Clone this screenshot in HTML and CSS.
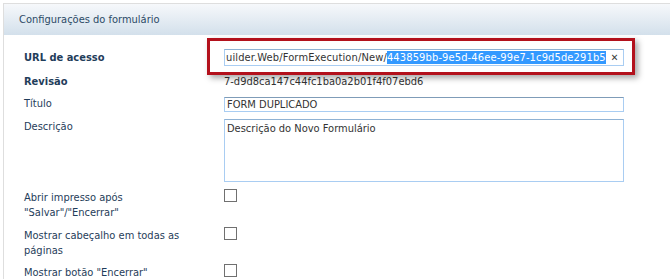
FILE: index.html
```html
<!DOCTYPE html>
<html>
  <head>
    <meta charset="UTF-8">
    <title>Configurações do formulário</title>
    <link rel="stylesheet" href="styles.css">
  </head>
  <body>
    <div class="panel">
      <div class="panel-header">Configurações do formulário</div>

      <div class="panel-body">
        <div class="row">
          <label class="label strong url-label">URL de acesso</label>
          <div class="field url-field">
            <div class="url-input">
              <span class="url-text">uilder.Web/FormExecution/New/<span class="selected">443859bb-9e5d-46ee-99e7-1c9d5de291b5</span></span>
              <span class="clear">&#x2715;</span>
            </div>
            <div class="highlight"></div>
          </div>
        </div>

        <div class="row">
          <label class="label strong">Revisão</label>
          <div class="field text-value">7-d9d8ca147c44fc1ba0a2b01f4f07ebd6</div>
        </div>

        <div class="row">
          <label class="label" for="titulo">Título</label>
          <input class="field text-input" id="titulo" type="text" value="FORM DUPLICADO">
        </div>

        <div class="row">
          <label class="label" for="descricao">Descrição</label>
          <textarea class="field text-area" id="descricao">Descrição do Novo Formulário</textarea>
        </div>

        <div class="row">
          <label class="label wrap">Abrir impresso após "Salvar"/"Encerrar"</label>
          <input class="check" type="checkbox">
        </div>

        <div class="row">
          <label class="label wrap">Mostrar cabeçalho em todas as páginas</label>
          <input class="check" type="checkbox">
        </div>

        <div class="row last-row">
          <label class="label wrap">Mostrar botão "Encerrar"</label>
          <input class="check" type="checkbox">
        </div>
      </div>
    </div>
  </body>
</html>
```

FILE: styles.css
```css
body {
  margin: 0;
  padding: 0;
  background-color: #fff;
  font-family: "DejaVu Sans Condensed", "DejaVu Sans", sans-serif;
  font-size: 11px;
  color: #1f3d5a;
}
.panel {
  margin: 3px 0 0 3px;
  border-top: 1px solid #dedede;
  border-left: 1px solid #dedede;
  height: 276px;
  overflow: hidden;
}
.panel-header {
  height: 31px;
  line-height: 32px;
  padding-left: 15px;
  background: linear-gradient(#f6f8fb, #d3e0eb);
  color: #2c4a66;
}
.panel-body {
  padding: 14px 0 0 20px;
  display: flex;
  flex-direction: column;
  gap: 7px;
}
.row {
  display: flex;
  align-items: flex-start;
}
.last-row {
  margin-top: -1px;
}
.label {
  width: 200px;
  flex-shrink: 0;
  line-height: 15px;
}
.label.strong {
  font-weight: bold;
}
.label.url-label {
  line-height: 18px;
}
.label.wrap {
  width: 165px;
  margin-right: 35px;
  padding-top: 1px;
}
.field {
  width: 400px;
  box-sizing: border-box;
}
.url-field {
  position: relative;
}
.url-input {
  height: 17px;
  box-sizing: border-box;
  border: 1px solid #a9cdf2;
  border-top-color: #8fb2d4;
  display: flex;
  align-items: center;
  padding-left: 1px;
  color: #333;
  white-space: nowrap;
  overflow: hidden;
}
.url-text {
  flex: 1;
  overflow: hidden;
  letter-spacing: 0.14px;
}
.selected {
  background-color: #3399ff;
  color: #fff;
  padding: 1px 0;
}
.clear {
  width: 17px;
  text-align: center;
  font-size: 10px;
  font-weight: bold;
  color: #3a3a3a;
}
/* red annotation box drawn over the url field */
.highlight {
  position: absolute;
  left: -17px;
  top: -11px;
  width: 428px;
  height: 37px;
  box-sizing: border-box;
  border: 3px solid #b3111c;
  box-shadow: 3px 3px 6px rgba(0, 0, 0, 0.35);
  pointer-events: none;
}
.text-value {
  color: #333;
  line-height: 15px;
}
.text-input {
  height: 15px;
  margin: 1px 0 0;
  padding: 0 2px;
  border: 1px solid #a9cdf2;
  border-top-color: #7f9cb8;
  font-family: inherit;
  font-size: 11px;
  color: #333;
  outline: none;
}
.text-area {
  height: 63px;
  margin: 0;
  padding: 2px;
  border: 1px solid #a9cdf2;
  border-top-color: #8fb2d4;
  font-family: inherit;
  font-size: 11px;
  color: #333;
  resize: none;
  outline: none;
}
.check {
  appearance: none;
  margin: 0;
  width: 13px;
  height: 13px;
  border: 1px solid #707070;
  background: #fff;
}
```
